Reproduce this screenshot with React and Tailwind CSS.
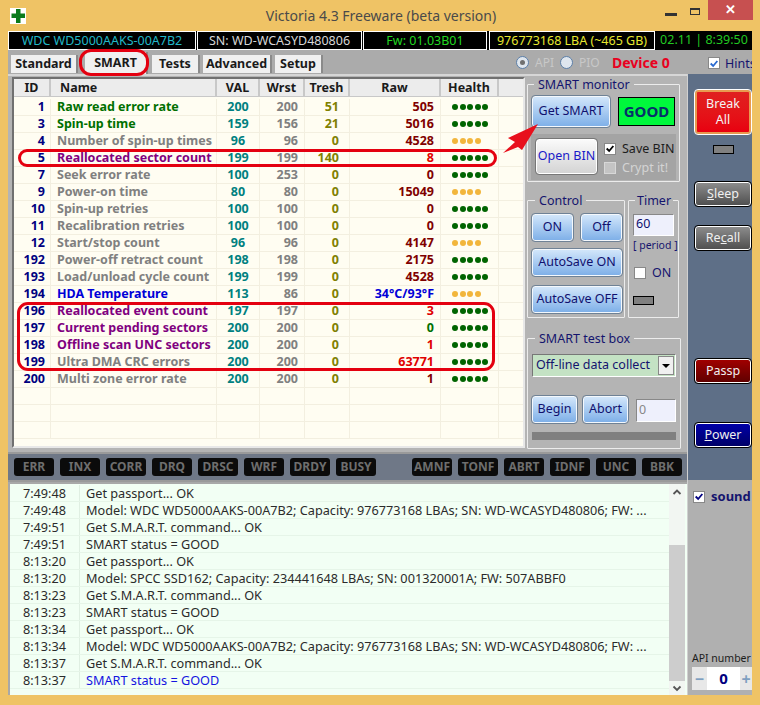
const FONT = { fontFamily: '"Noto Sans", Tahoma, sans-serif' };
const rows = [
  ['1','Raw read error rate','text-[#007000]','200','200','51','505','text-[#800000]',5],
  ['3','Spin-up time','text-[#007000]','159','156','21','5016','text-[#800000]',5],
  ['4','Number of spin-up times','text-[#808080]','96','96','0','4528','text-[#800000]',4],
  ['5','Reallocated sector count','text-[#800080]','199','199','140','8','text-[#e00000]',5],
  ['7','Seek error rate','text-[#808080]','100','253','0','0','text-[#800000]',5],
  ['9','Power-on time','text-[#808080]','80','80','0','15049','text-[#800000]',4],
  ['10','Spin-up retries','text-[#808080]','100','100','0','0','text-[#800000]',5],
  ['11','Recalibration retries','text-[#808080]','100','100','0','0','text-[#800000]',5],
  ['12','Start/stop count','text-[#808080]','96','96','0','4147','text-[#800000]',4],
  ['192','Power-off retract count','text-[#808080]','198','198','0','2175','text-[#800000]',5],
  ['193','Load/unload cycle count','text-[#808080]','199','199','0','4528','text-[#800000]',5],
  ['194','HDA Temperature','text-[#0000d8]','113','86','0','34°C/93°F','text-[#0000d8]',4],
  ['196','Reallocated event count','text-[#800080]','197','197','0','3','text-[#e00000]',5],
  ['197','Current pending sectors','text-[#800080]','200','200','0','0','text-[#007000]',5],
  ['198','Offline scan UNC sectors','text-[#800080]','200','200','0','1','text-[#e00000]',5],
  ['199','Ultra DMA CRC errors','text-[#808080]','200','200','0','63771','text-[#e00000]',5],
  ['200','Multi zone error rate','text-[#808080]','200','200','0','1','text-[#800000]',5],
  ['','','','','','','','',0],['','','','','','','','',0],['','','','','','','','',0],
];
const logs = [
  ['7:49:48','Get passport... OK'],
  ['7:49:48','Model: WDC WD5000AAKS-00A7B2; Capacity: 976773168 LBAs; SN: WD-WCASYD480806; FW: ...'],
  ['7:49:51','Get S.M.A.R.T. command... OK'],
  ['7:49:51','SMART status = GOOD'],
  ['8:13:20','Get passport... OK'],
  ['8:13:20','Model: SPCC SSD162; Capacity: 234441648 LBAs; SN: 001320001A; FW: 507ABBF0'],
  ['8:13:23','Get S.M.A.R.T. command... OK'],
  ['8:13:23','SMART status = GOOD'],
  ['8:13:34','Get passport... OK'],
  ['8:13:34','Model: WDC WD5000AAKS-00A7B2; Capacity: 976773168 LBAs; SN: WD-WCASYD480806; FW: ...'],
  ['8:13:37','Get S.M.A.R.T. command... OK'],
  ['8:13:37','SMART status = GOOD'],
];
const grid = 'grid grid-cols-[37px_166px_43px_45px_45px_91px_58px_1fr]';
const ledsA = ['ERR','INX','CORR','DRQ','DRSC','WRF','DRDY','BUSY'];
const ledsB = ['AMNF','TONF','ABRT','IDNF','UNC','BBK'];
const blue = 'rounded-[3px] border border-[#f4f8fc] outline outline-1 outline-[#6f8296] bg-linear-to-b from-[#d2e6fa] to-[#7fb0e8] text-[#10106e] text-[12.5px] whitespace-nowrap flex items-center justify-center';

function Led({ t }) {
  return <div className="w-[40px] h-[18px] rounded-[3px] bg-[#0b0b0b] text-[#6e6e6e] font-bold text-[12px] flex items-center justify-center">{t}</div>;
}
function Tab({ t, w, active, ml }) {
  return <div className={`${w} ${ml} shrink-0 ${active ? 'h-[22px] mt-[2px]' : 'h-[18px] mt-[5px]'} bg-[#f0f0f0] border-r-2 border-[#8a8a8a] font-bold text-[12.5px] text-[#1a1a1a] flex items-center justify-center`}>{t}</div>;
}
function Side({ t, u, bg, mt, after }) {
  return (
    <button className={`${mt} w-[56px] h-[24px] rounded-[3px] border border-white outline outline-1 outline-black ${bg} text-[#f0f0f0] text-[12.5px] flex items-center justify-center`}>
      {t}{u && <span className="underline">{u}</span>}{after}
    </button>
  );
}
function Box({ checked, dim }) {
  return <span className={`w-[12px] h-[12px] shrink-0 flex items-center justify-center ${dim ? 'bg-[#c4c4c4] border border-[#d8d8d8]' : 'bg-white border border-[#888]'}`}>
    {checked && <svg viewBox="0 0 12 12" className="w-[11px] h-[11px]"><path d="M2 6l3 3 5-6" fill="none" stroke={checked} strokeWidth="2.2" /></svg>}
  </span>;
}
function Group({ title, className, legend = 'ml-[3px] px-[4px]', children }) {
  return (
    <fieldset className={`border border-[#ececec] rounded-[1px] shrink-0 ${className}`}>
      <legend className={`${legend} text-[12.5px] leading-[15px] text-[#14146e]`}>{title}</legend>
      {children}
    </fieldset>
  );
}

export default function App() {
  return (
    <div style={FONT} className="relative w-[760px] h-[705px] overflow-hidden bg-[#efc365] flex flex-col pb-[10px]">
      {/* title bar */}
      <div className="h-[31px] shrink-0 flex items-start relative">
        <div className="ml-[10px] mt-[8px] w-[16px] h-[16px] bg-white flex items-center justify-center">
          <svg viewBox="0 0 16 16" className="w-[16px] h-[16px]"><path d="M6 1h4.500v4.500H15V10h-4.500v5H6v-5H1.500V5.500H6z" fill="#0a7a1c" /></svg>
        </div>
        <div className="flex-1 text-center text-[14px] text-[#4a4a4a] pt-[5px] pl-[83px]">Victoria 4.3 Freeware (beta version)</div>
        <div className="w-[107px] flex items-start shrink-0">
          <div className="w-[12px] h-[3px] bg-[#333] mt-[13px] ml-[12px]" />
          <div className="w-[10px] h-[7px] border border-[#333] border-t-[2px] mt-[8px] ml-[13px]" />
          <div className="w-[45px] h-[20px] bg-[#c75050] ml-[8px] flex items-center justify-center text-white text-[13px] font-bold">✕</div>
        </div>
      </div>
      <div className="flex-1 min-h-0 mx-[8px] flex flex-col">
        {/* status */}
        <div className="h-[19px] shrink-0 bg-black flex text-[12.5px] leading-[17px]">
          <div className="w-[188px] border border-white text-[#22b8c8] text-center">WDC WD5000AAKS-00A7B2</div>
          <div className="ml-[1px] w-[165px] border border-white text-[#d8d8d8] text-center">SN: WD-WCASYD480806</div>
          <div className="ml-[1px] w-[124px] border border-white text-[#22d822] text-center">Fw: 01.03B01</div>
          <div className="ml-[2px] w-[166px] border border-white text-[#e8e830] text-center">976773168 LBA (~465 GB)</div>
          <div className="flex-1 text-[#22c822] text-center whitespace-nowrap pl-[1px]">02.11 | 8:39:50</div>
        </div>
        {/* tabs */}
        <div className="h-[24px] shrink-0 bg-[#ababab] flex items-start relative overflow-hidden">
          <Tab t="Standard" w="w-[67px]" ml="ml-[3px]" />
          <Tab t="SMART" w="w-[63px]" ml="ml-[7px]" active />
          <Tab t="Tests" w="w-[48px]" ml="ml-[4px]" />
          <Tab t="Advanced" w="w-[69px]" ml="ml-[3px]" />
          <Tab t="Setup" w="w-[48px]" ml="ml-[3px]" />
          <span className="ml-[193px] mt-[6px] shrink-0 w-[13px] h-[13px] rounded-full bg-[#dfe6ee] border border-[#5c7fa8] flex items-center justify-center"><span className="w-[5px] h-[5px] rounded-full bg-[#707070]" /></span>
          <span className="ml-[6px] mt-[4px] w-[20px] shrink-0 text-[12px] text-[#c8c8c8]">API</span>
          <span className="ml-[5px] mt-[6px] shrink-0 w-[13px] h-[13px] rounded-full bg-[#dfe6ee] border border-[#5c7fa8]" />
          <span className="ml-[6px] mt-[4px] w-[20px] shrink-0 text-[12px] text-[#c8c8c8]">PIO</span>
          <span className="ml-[13px] mt-[2px] w-[57px] shrink-0 whitespace-nowrap text-[14px] font-bold text-[#e80020]">Device 0</span>
          <span className="ml-[39px] mt-[7px] shrink-0"><Box checked="#2a6ad0" /></span>
          <span className="ml-[5px] mt-[5px] shrink-0 text-[12.5px] text-[#14146e]">Hints</span>
        </div>
        {/* body */}
        <div className="flex-1 min-h-0 flex">
          <div className="w-[679px] shrink-0 flex flex-col">
            <div className="h-[378px] shrink-0 flex bg-[#b4b4b4] border-t-2 border-[#d6d6d6]">
              {/* table */}
              <div className="w-[513px] shrink-0 ml-[4px] mt-[1px] h-[371px] border-2 border-[#707070] border-r-[#e8e8e8] border-b-[#e8e8e8] bg-[#fffdf2] overflow-hidden">
                <div className={`${grid} h-[18px] bg-[#ececec] font-bold text-[12.5px] leading-[17px] text-[#1a1a1a] border-b border-[#c8c8c8]`}>
                  <div className="border-r-2 border-[#c8c8c8] text-center">ID</div>
                  <div className="border-r-2 border-[#c8c8c8] pl-[9px]">Name</div>
                  <div className="border-r-2 border-[#c8c8c8] text-center">VAL</div>
                  <div className="border-r-2 border-[#c8c8c8] text-center">Wrst</div>
                  <div className="border-r-2 border-[#c8c8c8] text-center">Tresh</div>
                  <div className="border-r-2 border-[#c8c8c8] text-center">Raw</div>
                  <div className="border-r-2 border-[#c8c8c8] text-center">Health</div>
                  <div />
                </div>
                <div className="mt-[2px]">
                {rows.map((r, i) => (
                  <div key={i} className={`${grid} h-[17px] font-bold text-[12.5px] leading-[16px] border-b border-[#f3efe0]`}>
                    <div className="text-right pr-[5px] text-[#000080] border-r border-[#f3efe0]">{r[0]}</div>
                    <div className={`pl-[6px] whitespace-nowrap border-r border-[#f3efe0] ${r[2]}`}>{r[1]}</div>
                    <div className="text-center text-[#008080] border-r border-[#f3efe0]">{r[3]}</div>
                    <div className="text-right pr-[6px] text-[#808080] border-r border-[#f3efe0]">{r[4]}</div>
                    <div className="text-right pr-[10px] text-[#808000] border-r border-[#f3efe0]">{r[5]}</div>
                    <div className={`text-right pr-[6px] border-r border-[#f3efe0] whitespace-nowrap ${r[7]}`}>{r[6]}</div>
                    <div className="flex items-center pl-[11px] gap-[1.500px] border-r border-[#f3efe0]">
                      {Array.from({ length: r[8] }).map((_, d) => (
                        <span key={d} className={`w-[6px] h-[6px] rounded-full ${r[8] === 5 ? 'bg-[#006400]' : 'bg-[#f2b63c]'}`} />
                      ))}
                    </div>
                    <div />
                  </div>
                ))}
                </div>
              </div>
              {/* right group */}
              <div className="w-[162px] shrink-0 pl-[2px] flex flex-col">
                <Group title="SMART monitor" className="w-[153px] h-[105px] pt-[4px] px-[3px] mt-[1px]">
                  <div className="flex items-start ml-[1px]">
                    <button className={`${blue} w-[78px] h-[31px]`}>Get SMART</button>
                    <div className="ml-[8px] mt-[1px] w-[57px] h-[29px] bg-[#00f83c] border border-black flex items-center justify-center text-[#06306a] font-bold text-[15px]">GOOD</div>
                  </div>
                  <div className="mt-[7px] h-[46px] w-[145px] bg-[#a4a4a4] flex pt-[5px] pl-[5px]">
                    <button className="w-[61px] h-[35px] shrink-0 whitespace-nowrap rounded-[3px] border border-white bg-linear-to-b from-[#fafafa] to-[#d4d4d4] text-[#1a1ac8] text-[12.5px] outline outline-1 outline-[#777]">Open BIN</button>
                    <div className="ml-[7px] flex flex-col text-[12.5px] leading-[15px] whitespace-nowrap">
                      <div className="flex items-center gap-[6px] mt-[2px] text-[#1c1c1c]"><Box checked="#000" />Save BIN</div>
                      <div className="flex items-center gap-[6px] mt-[4px] text-[#d4d4d4]"><Box dim />Crypt it!</div>
                    </div>
                  </div>
                </Group>
                <div className="mt-[11px] flex gap-[3px]">
                  <Group title="Control" className="w-[98px] h-[125px] pl-[4px] pt-[6px]">
                    <div className="flex gap-[8px]">
                      <button className={`${blue} w-[41px] h-[27px]`}>ON</button>
                      <button className={`${blue} w-[41px] h-[27px]`}>Off</button>
                    </div>
                    <button className={`${blue} w-[90px] h-[27px] mt-[8px]`}>AutoSave ON</button>
                    <button className={`${blue} w-[90px] h-[27px] mt-[10px]`}>AutoSave OFF</button>
                  </Group>
                  <Group title="Timer" legend="ml-[2px] px-[2px]" className="w-[50px] h-[125px] pl-[4px] pt-[6px]">
                    <div className="w-[41px] h-[22px] bg-[#eef0fc] border border-[#888] border-r-white border-b-white text-[12.5px] leading-[18px] text-[#10106e] pl-[2px]">60</div>
                    <div className="text-[10.5px] leading-[14px] mt-[2px] text-[#14146e] whitespace-nowrap">[ period ]</div>
                    <div className="flex items-center gap-[6px] mt-[12px] ml-[1px] text-[12.5px] text-[#14146e]"><Box />ON</div>
                    <div className="mt-[13px] w-[21px] h-[9px] bg-[#808080] border border-black" />
                  </Group>
                </div>
                <Group title="SMART test box" className="mt-[13px] w-[153px] h-[118px] px-[4px] pt-[8px]">
                  <div className="w-[144px] h-[23px] flex items-center bg-[#c4e2c4] border border-[#777] border-r-white border-b-white pl-[3px] text-[12.5px] text-[#14146e]">
                    <span className="flex-1 whitespace-nowrap">Off-line data collect</span>
                    <span className="w-[16px] h-[19px] mr-[1px] shrink-0 bg-[#f0f0f0] border border-[#888] flex items-center justify-center"><span className="w-0 h-0 border-x-[4px] border-x-transparent border-t-[4px] border-t-black" /></span>
                  </div>
                  <div className="flex mt-[19px]">
                    <button className={`${blue} w-[45px] h-[27px]`}>Begin</button>
                    <button className={`${blue} w-[45px] h-[27px] ml-[6px]`}>Abort</button>
                    <div className="ml-[8px] mt-[3px] w-[40px] h-[23px] bg-[#eef0fc] border border-[#888] border-r-white border-b-white text-[12.5px] leading-[20px] pl-[2px] text-[#888]">0</div>
                  </div>
                  <div className="mt-[9px] h-[8px] w-[144px] bg-[#808080]" />
                </Group>
              </div>
            </div>
            {/* LED bar */}
            <div className="h-[30px] shrink-0 bg-[#6f7887] border-y-2 border-[#9a9a9a] pl-[6px] pr-[5px] flex items-center justify-between">
              <div className="flex gap-[6px]">{ledsA.map((t) => <Led key={t} t={t} />)}</div>
              <div className="flex gap-[6px]">{ledsB.map((t) => <Led key={t} t={t} />)}</div>
            </div>
            {/* log */}
            <div className="flex-1 min-h-0 flex bg-[#f2fff4] border-l-2 border-t-2 border-[#a8a8a8]">
              <div className="flex-1 min-w-0 pt-[1px] overflow-hidden">
                {logs.map((l, i) => (
                  <div key={i} className="flex h-[17px] text-[12.7px] leading-[16px] text-[#2b2b2b] border-b border-[#e6f5e8]">
                    <div className="w-[70px] shrink-0 text-right pr-[13px] border-r border-[#e0efe2]">{l[0]}</div>
                    <div className={`pl-[6px] whitespace-nowrap ${i === 11 ? 'text-[#1414e0]' : ''}`}>{l[1]}</div>
                  </div>
                ))}
              </div>
              <div className="w-[16px] shrink-0 mr-[2px] flex flex-col items-center bg-[#f2f6f2]">
                <svg viewBox="0 0 10 10" className="w-[10px] h-[10px] mt-[3px]"><path d="M1.500 7L5 3.500 8.500 7" fill="none" stroke="#555" strokeWidth="1.800" /></svg>
                <div className="w-full flex-1 mt-[48px] mb-[2px] bg-[#cdcdcd]" />
                <svg viewBox="0 0 10 10" className="w-[10px] h-[10px] mb-[2px]"><path d="M1.500 3.500L5 7 8.500 3.500" fill="none" stroke="#555" strokeWidth="1.800" /></svg>
              </div>
            </div>
          </div>
          {/* sidebar */}
          <div className="w-[65px] shrink-0 flex flex-col border-l border-[#d0d0d0]">
            <div className="h-[406px] shrink-0 bg-[#5e6f87] flex flex-col items-center pl-[6px]">
              <button className="mt-[16px] w-[56px] h-[44px] rounded-[3px] border-2 border-[#e89a50] outline outline-1 outline-white bg-linear-to-b from-[#e02020] to-[#e80010] text-[#f4f4f4] text-[12.5px] leading-[16px]">Break<br />All</button>
              <div className="mt-[11px] w-[21px] h-[9px] bg-[#808080] border border-black" />
              <Side t="" u="S" after="leep" mt="mt-[28px]" bg="bg-linear-to-b from-[#8c8c8c] to-[#505050]" />
              <Side t="Re" u="c" after="all" mt="mt-[20px]" bg="bg-linear-to-b from-[#8c8c8c] to-[#505050]" />
              <Side t="Passp" mt="mt-[109px]" bg="bg-linear-to-b from-[#a00000] to-[#600000]" />
              <Side t="" u="P" after="ower" mt="mt-[40px]" bg="bg-linear-to-b from-[#0000a8] to-[#000068]" />
            </div>
            <div className="flex-1 min-h-0 bg-[#b0b0b0] flex flex-col pl-[4px]">
              <div className="mt-[7px] ml-[1px] flex items-center gap-[6px] text-[13px] font-bold text-[#14146e]"><Box checked="#000080" />sound</div>
              <div className="mt-auto text-[10.5px] leading-[14px] text-[#1c1c1c] whitespace-nowrap">API number</div>
              <div className="mt-[2px] mb-[5px] h-[23px] flex bg-white">
                <div className="w-[15px] bg-[#e8e8e8] text-[#7f9fc0] font-bold flex items-center justify-center">−</div>
                <div className="flex-1 text-center font-bold text-[15px] text-[#000080] leading-[22px]">0</div>
                <div className="w-[12px] bg-[#e8e8e8] text-[#7f9fc0] font-bold flex items-center justify-center">+</div>
              </div>
            </div>
          </div>
        </div>
      </div>
      {/* annotations */}
      <div className="absolute left-[79px] top-[49px] w-[70px] h-[27px] border-[3px] border-[#e40010] rounded-[12px]" />
      <div className="absolute left-[18px] top-[149px] w-[479px] h-[18px] border-[3px] border-[#e40010] rounded-[9px]" />
      <div className="absolute left-[17px] top-[302px] w-[478px] h-[69px] border-[3px] border-[#e40010] rounded-[11px]" />
      <svg className="absolute left-[500px] top-[122px] w-[42px] h-[34px]" viewBox="0 0 42 34">
        <path d="M38 2L8 16l7 4L3 31l15-6 4 3z" fill="#e8101c" />
      </svg>
    </div>
  );
}
